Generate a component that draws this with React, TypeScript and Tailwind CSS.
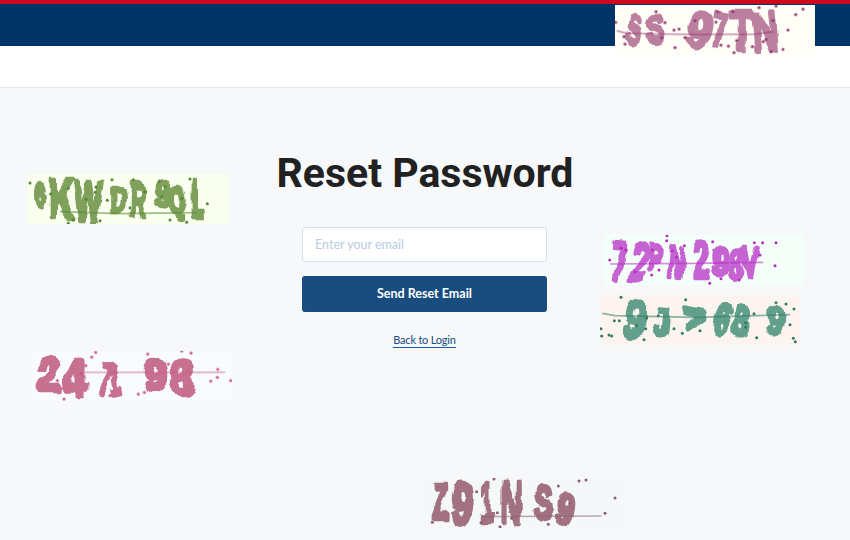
import React from 'react'

type Glyph = [string, number, number, number, number, number]

type CaptchaProps = {
  left: number
  top: number
  view: [number, number]
  bg: string
  color: string
  dot: string
  line: string
  glyphs: Glyph[]
  dots: [number, number][]
  id: string
  seed: number
}

// captcha coordinates are in the 3x zoom space of each picture
const Captcha = ({ left, top, view, bg, color, dot, line, glyphs, dots, id, seed }: CaptchaProps) => (
  <svg
    className="absolute"
    style={{ left, top, background: bg }}
    width={200}
    height={50}
    viewBox={`${view[0]} ${view[1]} 600 150`}
  >
    <defs>
      <filter id={id} x="-20%" y="-20%" width="140%" height="140%">
        <feTurbulence type="fractalNoise" baseFrequency="0.016" numOctaves="2" seed={seed} />
        <feDisplacementMap in="SourceGraphic" scale="24" xChannelSelector="R" yChannelSelector="G" />
        <feGaussianBlur stdDeviation="1.8" />
      </filter>
      <filter id={`${id}d`} x="-20%" y="-20%" width="140%" height="140%">
        <feGaussianBlur stdDeviation="1" />
      </filter>
    </defs>
    <g filter={`url(#${id})`}>
      {glyphs.map(([c, x, y, size, rot, sx], i) => (
        <text
          key={i}
          transform={`translate(${x} ${y}) rotate(${rot}) scale(${sx} 1)`}
          textAnchor="middle"
          fontFamily="'Liberation Sans', sans-serif"
          fontWeight="700"
          fontSize={size}
          fill={color}
          stroke={color}
          strokeWidth="13"
          strokeLinejoin="round"
        >
          {c}
        </text>
      ))}
    </g>
    <g filter={`url(#${id}d)`}>
      <polyline points={line} fill="none" stroke={dot} strokeOpacity="0.55" strokeWidth="5" />
      {dots.map(([x, y], i) => (
        <circle key={i} cx={x} cy={y} r="4.5" fill={dot} />
      ))}
    </g>
  </svg>
)

const App = () => {
  return (
    <div className="relative h-[540px] w-[850px] overflow-hidden bg-[#f6f8fa]">
      <header className="h-[46px] border-t-4 border-[#cc0a1e] bg-[#003366]" />
      <div className="h-[42px] border-b border-[#e3e9f0] bg-white" />

      <main className="flex flex-col items-center pt-[59px] font-['Lato',sans-serif]">
        <h1 className="font-['Roboto',sans-serif] text-[41px] leading-[52px] font-bold text-[#212121]">Reset Password</h1>
        <form className="mt-[28px] mr-px flex w-[245px] flex-col">
          <input
            placeholder="Enter your email"
            className="h-[35px] rounded-[3px] border border-[#d5e1ef] bg-white px-3 text-[12.5px] outline-none placeholder:text-[#b7cbe2]"
          />
          <button type="button" className="mt-[14px] h-[36px] rounded-[3px] bg-[#194d80] text-[12.5px] font-bold text-white">
            Send Reset Email
          </button>
        </form>
        <a href="#" className="mt-[20px] mr-px border-b-[1.5px] border-[#1a5ba0] text-[11px] leading-[15px] tracking-[-0.2px] text-[#194d80]">
          Back to Login
        </a>
      </main>

      <Captcha
        id="c1"
        seed={3}
        left={615}
        top={5}
        view={[45, 15]}
        bg="#fffef6"
        color="#bb7f9f"
        dot="#93386f"
        line="50,92 80,100 250,103 460,103 522,95"
        glyphs={[
          ['S', 98, 132, 125, 6, 0.5],
          ['S', 165, 132, 125, 0, 0.65],
          ['9', 285, 140, 150, 15, 0.85],
          ['7', 350, 140, 150, 8, 0.6],
          ['T', 425, 150, 170, 0, 0.65],
          ['N', 500, 150, 170, -5, 0.65],
        ]}
        dots={[[47, 67], [168, 35], [195, 68], [222, 90], [237, 87], [285, 62], [255, 113], [225, 143], [185, 113], [72, 110], [75, 132], [353, 35], [348, 66], [399, 35], [477, 23], [528, 18], [609, 27], [587, 44], [519, 62], [564, 90], [363, 135], [385, 138], [410, 122], [402, 158], [457, 140], [490, 125], [498, 118], [513, 155], [549, 148]]}
      />
      <Captcha
        id="c2"
        seed={8}
        left={28}
        top={174}
        view={[24, 27]}
        bg="#fbfff0"
        color="#7fa15b"
        dot="#4f8a30"
        line="120,140 300,146 530,143"
        glyphs={[
          ['6', 60, 125, 100, 0, 0.6],
          ['K', 125, 160, 165, 0, 0.6],
          ['W', 205, 165, 165, 0, 0.55],
          ['D', 295, 145, 110, 0, 0.55],
          ['R', 352, 155, 150, 0, 0.45],
          ['9', 430, 125, 110, 0, 0.8],
          ['Q', 472, 145, 115, 0, 0.6],
          ['L', 535, 160, 160, 0, 0.45],
        ]}
        dots={[[30, 54], [92, 87], [145, 70], [160, 165], [145, 175], [228, 66], [226, 82], [198, 103], [262, 106], [276, 44], [240, 167], [340, 44], [375, 80], [330, 128], [418, 50], [435, 65], [425, 95], [510, 42], [486, 100], [450, 165], [500, 172], [562, 116]]}
      />
      <Captcha
        id="c3"
        seed={5}
        left={604}
        top={235}
        view={[27, 15]}
        bg="#f5fff9"
        color="#c663d3"
        dot="#b52dc4"
        line="45,102 300,100 505,97"
        glyphs={[
          ['7', 68, 150, 165, 5, 0.5],
          ['2', 125, 150, 160, 10, 0.55],
          ['P', 178, 125, 120, 5, 0.55],
          ['N', 240, 142, 130, 5, 0.5],
          ['2', 320, 145, 165, 0, 0.6],
          ['9', 375, 135, 120, 5, 0.7],
          ['8', 420, 145, 125, 5, 0.65],
          ['V', 465, 140, 130, 0, 0.6],
        ]}
        dots={[[216, 17], [215, 32], [92, 60], [78, 55], [44, 90], [120, 125], [170, 135], [192, 120], [172, 60], [232, 62], [268, 47], [245, 82], [353, 35], [378, 146], [344, 160], [432, 150], [478, 38], [503, 38], [543, 38], [495, 75], [540, 107]]}
      />
      <Captcha
        id="c4"
        seed={11}
        left={600}
        top={295}
        view={[15, 195]}
        bg="#fdf4f0"
        color="#62a08c"
        dot="#2e7a62"
        line="22,250 60,257 300,262 585,254"
        glyphs={[
          ['9', 108, 325, 165, 12, 0.65],
          ['J', 195, 315, 115, 5, 0.8],
          ['>', 310, 300, 125, -12, 0.9],
          ['6', 375, 315, 125, 10, 0.7],
          ['8', 435, 315, 125, 5, 0.7],
          ['9', 535, 315, 130, 8, 0.75],
        ]}
        dots={[[78, 202], [272, 209], [58, 272], [73, 272], [155, 264], [190, 257], [125, 287], [152, 296], [147, 329], [237, 296], [262, 310], [315, 302], [20, 318], [18, 296], [42, 315], [50, 318], [477, 251], [452, 278], [452, 292], [485, 323], [543, 218], [573, 222], [597, 237], [585, 284], [595, 325], [601, 335]]}
      />
      <Captcha
        id="c5"
        seed={2}
        left={32}
        top={351}
        view={[21, 18]}
        bg="#f8fbff"
        color="#c7708f"
        dot="#c7577f"
        line="180,82 600,82"
        glyphs={[
          ['2', 72, 135, 135, 0, 0.85],
          ['4', 150, 155, 160, 0, 0.8],
          ['7', 232, 145, 130, 15, 0.55],
          ['1', 275, 150, 140, -10, 0.55],
          ['9', 390, 135, 125, 0, 1],
          ['8', 472, 152, 150, 0, 0.85],
        ]}
        dots={[[212, 22], [200, 36], [182, 62], [168, 85], [97, 107], [112, 129], [117, 162], [255, 152], [340, 147], [358, 142], [368, 27], [430, 57], [470, 18], [498, 24], [578, 73], [577, 97], [557, 108], [617, 107]]}
      />
      <Captcha
        id="c6"
        seed={7}
        left={424}
        top={478}
        view={[12, 24]}
        bg="#f5f8f9"
        color="#a27182"
        dot="#8d5f72"
        line="190,140 545,138"
        glyphs={[
          ['Z', 62, 148, 150, 0, 0.5],
          ['9', 122, 160, 170, 5, 0.7],
          ['1', 200, 155, 170, 0, 0.4],
          ['N', 275, 162, 185, 0, 0.5],
          ['S', 370, 145, 140, 0, 0.6],
          ['9', 428, 160, 130, 10, 0.75],
        ]}
        dots={[[222, 27], [170, 65], [232, 128], [183, 158], [37, 157], [275, 145], [240, 170], [385, 163], [415, 48], [450, 100], [477, 33], [498, 30], [585, 84], [555, 130]]}
      />
    </div>
  )
}

export default App
